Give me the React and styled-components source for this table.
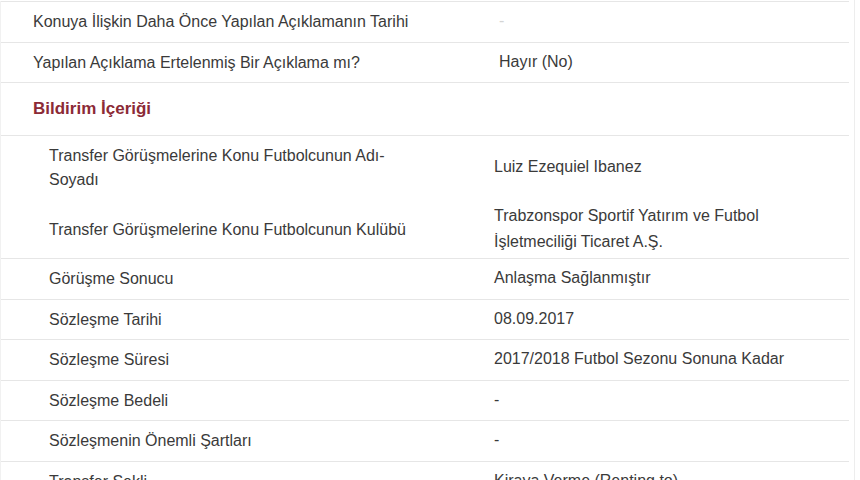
import React from "react";
import styled, { createGlobalStyle } from "styled-components";

const Global = createGlobalStyle`
  html, body { margin: 0; padding: 0; background: #ffffff; }
  body { font-family: "Liberation Sans", Arial, sans-serif; color: #3a3a3a; }
`;

const Frame = styled.div`
  width: 855px;
  height: 480px;
  overflow: hidden;
  border-right: 1px solid #ededed;
  box-sizing: border-box;
`;

const Table = styled.div`
  width: 849px;
  margin-top: 1px;
  border-left: 1px solid #f1f1f1;
  box-sizing: border-box;
`;

const Row = styled.div`
  display: grid;
  grid-template-columns: ${(p) => p.$labelCol}px 1fr;
  align-items: center;
  border-top: 1px solid ${(p) => (p.$noLine ? "transparent" : "#e6e6e6")};
  font-size: 16px;
  line-height: 24px;
`;

const Label = styled.div`
  padding: 8px 62px 7.5px ${(p) => p.$indent}px;
`;

const Value = styled.div`
  padding: 2px 16px 3.5px 14px;
  line-height: 26px;
  color: ${(p) => (p.$faint ? "#d4d4d4" : "inherit")};
`;

const Header = styled.div`
  border-top: 1px solid #e6e6e6;
  padding: 14px 16px 14px 32px;
  font-size: 17px;
  line-height: 24px;
  font-weight: bold;
  color: #8c2a36;
`;

const top = [
  ["Konuya İlişkin Daha Önce Yapılan Açıklamanın Tarihi", "-", true],
  ["Yapılan Açıklama Ertelenmiş Bir Açıklama mı?", "Hayır (No)"],
];

const nested = [
  ["Transfer Görüşmelerine Konu Futbolcunun Adı-Soyadı", "Luiz Ezequiel Ibanez"],
  [
    "Transfer Görüşmelerine Konu Futbolcunun Kulübü",
    "Trabzonspor Sportif Yatırım ve Futbol İşletmeciliği Ticaret A.Ş.",
    true,
  ],
  ["Görüşme Sonucu", "Anlaşma Sağlanmıştır"],
  ["Sözleşme Tarihi", "08.09.2017"],
  ["Sözleşme Süresi", "2017/2018 Futbol Sezonu Sonuna Kadar"],
  ["Sözleşme Bedeli", "-"],
  ["Sözleşmenin Önemli Şartları", "-"],
  ["Transfer Şekli", "Kiraya Verme (Renting to)"],
];

export default function App() {
  return (
    <>
      <Global />
      <Frame>
        <Table>
          {top.map(([l, v, faint]) => (
            <Row key={l} $labelCol={484}>
              <Label $indent={32}>{l}</Label>
              <Value $faint={faint}>{v}</Value>
            </Row>
          ))}
          <Header>Bildirim İçeriği</Header>
          {nested.map(([l, v, noLine]) => (
            <Row key={l} $labelCol={479} $noLine={noLine}>
              <Label $indent={48}>{l}</Label>
              <Value>{v}</Value>
            </Row>
          ))}
        </Table>
      </Frame>
    </>
  );
}
